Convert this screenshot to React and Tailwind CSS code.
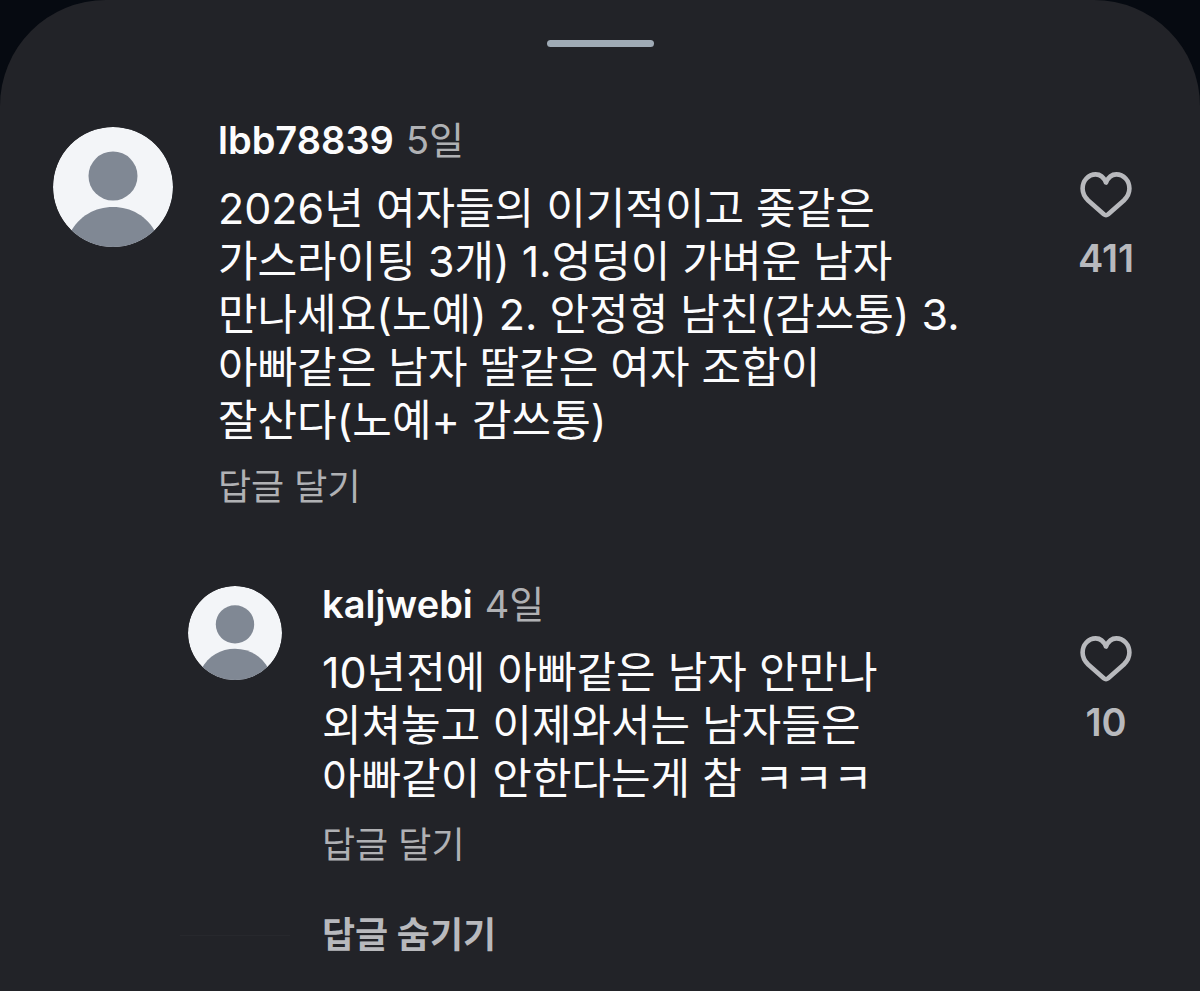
const SANS = "font-['Inter','Noto_Sans_CJK_KR',sans-serif]";

function Avatar({ className }) {
  return (
    <svg viewBox="0 0 120 120" className={`shrink-0 rounded-full ${className}`} aria-hidden="true">
      <circle cx="60" cy="60" r="60" fill="#f3f5f8" />
      <circle cx="60" cy="49" r="24.5" fill="#808894" />
      <path d="M17 106c9-17 25-26 43-26s34 9 43 26v14H17z" fill="#808894" />
    </svg>
  );
}

function LikeButton({ count }) {
  return (
    <button type="button" className="flex w-16 shrink-0 flex-col items-center gap-4 text-[#b8b9bd]">
      <svg viewBox="0 0 52 46" className="h-[46px] w-[52px]" fill="none" stroke="currentColor" strokeWidth="4.6" strokeLinejoin="round" aria-label="좋아요">
        <path d="M26 10.500C23.700 5 19.900 2.400 15.700 2.400C8.300 2.400 2.600 8.600 2.600 16.500C2.600 21.300 4.400 24.800 8.200 28.500L23.800 42.200Q26 44 28.200 42.200L43.800 28.500C47.600 24.800 49.400 21.300 49.400 16.500C49.400 8.600 43.700 2.400 36.300 2.400C32.100 2.400 28.300 5 26 10.500Z" />
      </svg>
      <span className="text-[38px] leading-[48px] font-semibold">{count}</span>
    </button>
  );
}

function Comment({ name, age, lines, likes, reply }) {
  return (
    <article className={reply ? "flex items-start pr-[62px] pl-[188px]" : "flex items-start pr-[62px] pl-[53px]"}>
      <Avatar className={reply ? "mt-1 mr-10 size-[94px]" : "mt-[9px] mr-[45px] size-[120px]"} />
      <div className="min-w-0 flex-1">
        <header className="flex items-baseline gap-3 leading-[44px]">
          <a href="#profile" className="text-[38px] font-semibold">{name}</a>
          <time className="text-[38px] text-[#b0b1b4]">{age}</time>
        </header>
        <p className="mt-5 text-[43px] leading-[53px] whitespace-nowrap">
          {lines.map((line) => (
            <span key={line} className="block">{line}</span>
          ))}
        </p>
        <button type="button" className="mt-4 block text-[36px] leading-[48px] text-[#b0b1b4]">답글 달기</button>
      </div>
      <div className="mt-[54px]">
        <LikeButton count={likes} />
      </div>
    </article>
  );
}

export default function App() {
  return (
    <div className={`min-h-screen bg-[#060a11] text-[#fcfcfd] ${SANS}`}>
      <main className="min-h-screen rounded-t-[106px] bg-[#222328] pt-10">
        <div className="mx-auto h-[7px] w-[107px] rounded-full bg-[#a0abb6]" />
        <section className="mt-[71px] flex flex-col gap-[71px]">
          <Comment
            name="lbb78839"
            age="5일"
            likes="411"
            lines={[
              "2026년 여자들의 이기적이고 좆같은",
              "가스라이팅 3개) 1.엉덩이 가벼운 남자",
              "만나세요(노예) 2. 안정형 남친(감쓰통) 3.",
              "아빠같은 남자 딸같은 여자 조합이",
              "잘산다(노예+ 감쓰통)",
            ]}
          />
          <Comment
            reply
            name="kaljwebi"
            age="4일"
            likes="10"
            lines={[
              "10년전에 아빠같은 남자 안만나",
              "외쳐놓고 이제와서는 남자들은",
              "아빠같이 안한다는게 참 ㅋㅋㅋ",
            ]}
          />
        </section>
        <div className="mt-[42px] flex items-center pl-[180px]">
          <div className="mr-8 h-px w-[110px] bg-[#27282d]" />
          <button type="button" className="text-[36px] leading-[48px] font-bold text-[#b8b9bd]">답글 숨기기</button>
        </div>
      </main>
    </div>
  );
}
